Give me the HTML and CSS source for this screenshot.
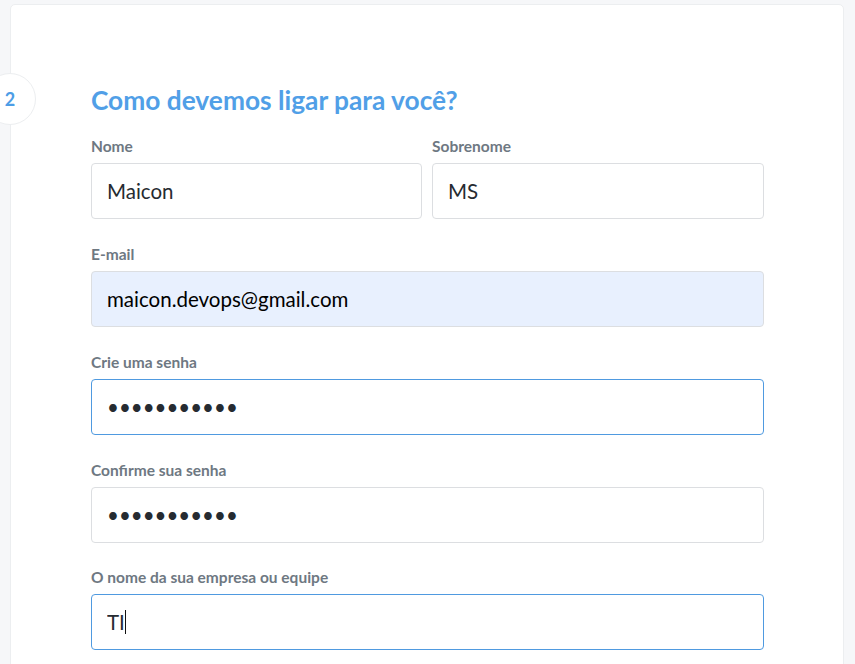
FILE: index.html
```html
<!DOCTYPE html>
<html lang="pt-BR">
<head>
<meta charset="utf-8">
<title>Cadastro</title>
<link rel="stylesheet" href="styles.css">
</head>
<body>
<div class="page">
  <section class="card">
    <div class="step">2</div>
    <h1 class="title">Como devemos ligar para você?</h1>
    <form class="form">
      <div class="row">
        <div class="group">
          <label class="label">Nome</label>
          <input class="input" type="text" value="Maicon">
        </div>
        <div class="group">
          <label class="label">Sobrenome</label>
          <input class="input" type="text" value="MS">
        </div>
      </div>
      <div class="group">
        <label class="label">E-mail</label>
        <input class="input autofill" type="email" value="maicon.devops@gmail.com">
      </div>
      <div class="group">
        <label class="label">Crie uma senha</label>
        <input class="input active" type="password" value="abcdefghijk">
      </div>
      <div class="group">
        <label class="label">Confirme sua senha</label>
        <input class="input" type="password" value="abcdefghijk">
      </div>
      <div class="group last">
        <label class="label">O nome da sua empresa ou equipe</label>
        <div class="caret-wrap">
          <input class="input active" type="text" value="TI">
          <span class="caret"></span>
        </div>
      </div>
    </form>
  </section>
</div>
</body>
</html>
```
FILE: styles.css
```css
* { box-sizing: border-box; }
html, body {
  margin: 0;
  padding: 0;
  background: #f6f7f9;
  font-family: Lato, "Open Sans", sans-serif;
}
.page {
  padding: 4px 11px 0 10px;
  height: 664px;
  overflow: hidden;
}
.card {
  position: relative;
  background: #ffffff;
  border: 1px solid #eceef0;
  border-radius: 5px;
  padding: 79px 0 40px 80px;
  min-height: 700px;
}
.step {
  position: absolute;
  left: -27px;
  top: 68px;
  width: 52px;
  height: 52px;
  border-radius: 50%;
  border: 1px solid #eceef0;
  background: #ffffff;
  color: #4d9de6;
  font-weight: 700;
  font-size: 18px;
  display: flex;
  align-items: center;
  justify-content: center;
}
.title {
  margin: 0 0 21px;
  font-size: 26.3px;
  line-height: 32px;
  font-weight: 700;
  color: #519fe7;
}
.form {
  width: 673px;
}
.row {
  display: grid;
  grid-template-columns: 331px 1fr;
  column-gap: 10px;
}
.group {
  display: flex;
  flex-direction: column;
  margin-bottom: 26px;
}
.group.last {
  margin-top: -1px;
}
.label {
  font-size: 15.5px;
  line-height: 18px;
  font-weight: 700;
  color: #6e7882;
  margin-bottom: 8px;
}
.input {
  width: 100%;
  height: 56px;
  border: 1px solid #dcdee1;
  border-radius: 4px;
  background: #ffffff;
  padding: 0 15px;
  font-family: Lato, sans-serif;
  font-size: 20.5px;
  color: #262b31;
  outline: none;
}
.input.autofill {
  background: #e8f0fe;
  color: #000000;
}
.input.active {
  border-color: #4f9ae0;
}
.caret-wrap {
  position: relative;
}
.caret {
  position: absolute;
  left: 34px;
  top: 16px;
  width: 1px;
  height: 24px;
  background: #111;
}
```
